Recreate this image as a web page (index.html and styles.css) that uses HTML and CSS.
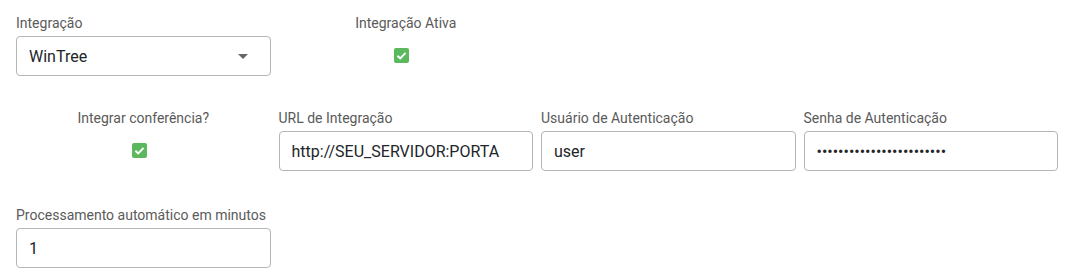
FILE: index.html
```html
<!DOCTYPE html>
<html lang="pt-BR">
<head>
    <meta charset="UTF-8">
    <title>Integração</title>
    <link rel="stylesheet" href="styles.css">
</head>
<body>
    <form class="form-grid">
        <div class="field">
            <label for="integracao">Integração</label>
            <div class="select-box" id="integracao">
                <span>WinTree</span>
                <span class="caret"></span>
            </div>
        </div>
        <div class="field check-field">
            <label>Integração Ativa</label>
            <span class="check"><svg viewBox="0 0 14 14"><path d="M3.2 7.2l2.6 2.5 5-5.2" /></svg></span>
        </div>
        <div class="row-break"></div>

        <div class="field check-field">
            <label>Integrar conferência?</label>
            <span class="check"><svg viewBox="0 0 14 14"><path d="M3.2 7.2l2.6 2.5 5-5.2" /></svg></span>
        </div>
        <div class="field">
            <label for="url">URL de Integração</label>
            <input type="text" id="url" value="http://SEU_SERVIDOR:PORTA">
        </div>
        <div class="field">
            <label for="usuario">Usuário de Autenticação</label>
            <input type="text" id="usuario" value="user">
        </div>
        <div class="field">
            <label for="senha">Senha de Autenticação</label>
            <input type="password" id="senha" value="abcdefghijklmnopqrstuvwx">
        </div>

        <div class="field last-row">
            <label for="minutos">Processamento automático em minutos</label>
            <input type="text" id="minutos" value="1">
        </div>
    </form>
</body>
</html>
```

FILE: styles.css
```css
body {
    margin: 0;
    background: #fff;
    font-family: Roboto, "Liberation Sans", sans-serif;
}

.form-grid {
    display: grid;
    grid-template-columns: repeat(4, 1fr);
    column-gap: 8px;
    row-gap: 33px;
    padding: 14px 12px 0 16px;
}

.row-break {
    grid-column: 3 / 5;
}

.field {
    display: flex;
    flex-direction: column;
}

.last-row {
    margin-top: 2px;
}

.field label {
    font-size: 14px;
    line-height: 18px;
    color: #5a5a5a;
    margin-bottom: 4px;
}

.field input,
.select-box {
    box-sizing: border-box;
    height: 40px;
    width: 100%;
    border: 1px solid #b5b5b5;
    border-radius: 4px;
    padding: 0 12px;
    font-family: inherit;
    font-size: 16px;
    color: #212529;
    background: #fff;
    outline: none;
}

.select-box {
    display: flex;
    align-items: center;
    justify-content: space-between;
}

.caret {
    width: 0;
    height: 0;
    border-left: 5px solid transparent;
    border-right: 5px solid transparent;
    border-top: 5px solid #666;
    margin-right: 10px;
}

.check-field {
    align-items: center;
}

.check {
    width: 15px;
    height: 15px;
    margin-top: 12px;
    margin-right: 8px;
    background: #5cb85c;
    border-radius: 2px;
    display: flex;
}

.check svg {
    width: 15px;
    height: 15px;
    fill: none;
    stroke: #fff;
    stroke-width: 1.8;
}
```
